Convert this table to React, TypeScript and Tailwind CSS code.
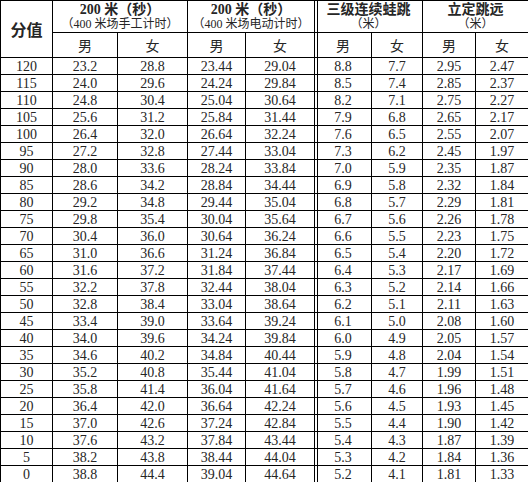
const rows: (string | number)[][] = [
  [120, '23.2', '28.8', '23.44', '29.04', '8.8', '7.7', '2.95', '2.47'],
  [115, '24.0', '29.6', '24.24', '29.84', '8.5', '7.4', '2.85', '2.37'],
  [110, '24.8', '30.4', '25.04', '30.64', '8.2', '7.1', '2.75', '2.27'],
  [105, '25.6', '31.2', '25.84', '31.44', '7.9', '6.8', '2.65', '2.17'],
  [100, '26.4', '32.0', '26.64', '32.24', '7.6', '6.5', '2.55', '2.07'],
  [95, '27.2', '32.8', '27.44', '33.04', '7.3', '6.2', '2.45', '1.97'],
  [90, '28.0', '33.6', '28.24', '33.84', '7.0', '5.9', '2.35', '1.87'],
  [85, '28.6', '34.2', '28.84', '34.44', '6.9', '5.8', '2.32', '1.84'],
  [80, '29.2', '34.8', '29.44', '35.04', '6.8', '5.7', '2.29', '1.81'],
  [75, '29.8', '35.4', '30.04', '35.64', '6.7', '5.6', '2.26', '1.78'],
  [70, '30.4', '36.0', '30.64', '36.24', '6.6', '5.5', '2.23', '1.75'],
  [65, '31.0', '36.6', '31.24', '36.84', '6.5', '5.4', '2.20', '1.72'],
  [60, '31.6', '37.2', '31.84', '37.44', '6.4', '5.3', '2.17', '1.69'],
  [55, '32.2', '37.8', '32.44', '38.04', '6.3', '5.2', '2.14', '1.66'],
  [50, '32.8', '38.4', '33.04', '38.64', '6.2', '5.1', '2.11', '1.63'],
  [45, '33.4', '39.0', '33.64', '39.24', '6.1', '5.0', '2.08', '1.60'],
  [40, '34.0', '39.6', '34.24', '39.84', '6.0', '4.9', '2.05', '1.57'],
  [35, '34.6', '40.2', '34.84', '40.44', '5.9', '4.8', '2.04', '1.54'],
  [30, '35.2', '40.8', '35.44', '41.04', '5.8', '4.7', '1.99', '1.51'],
  [25, '35.8', '41.4', '36.04', '41.64', '5.7', '4.6', '1.96', '1.48'],
  [20, '36.4', '42.0', '36.64', '42.24', '5.6', '4.5', '1.93', '1.45'],
  [15, '37.0', '42.6', '37.24', '42.84', '5.5', '4.4', '1.90', '1.42'],
  [10, '37.6', '43.2', '37.84', '43.44', '5.4', '4.3', '1.87', '1.39'],
  [5, '38.2', '43.8', '38.44', '44.04', '5.3', '4.2', '1.84', '1.36'],
  [0, '38.8', '44.4', '39.04', '44.64', '5.2', '4.1', '1.81', '1.33'],
];

const widths = [52, 65, 70, 58, 69, 57, 51, 53, 53];

const serif = "font-['Liberation_Serif','Noto_Sans_CJK_SC',serif]";
const hei = "font-['Noto_Sans_CJK_SC',sans-serif]";
// second rule of the double line, drawn inside the cell next to its left border
const dbl = 'shadow-[inset_2px_0_0_#fff,inset_3px_0_0_#000]';

function GroupHead({ top, sub, extra = '' }: { top: string; sub: string; extra?: string }) {
  return (
    <th colSpan={2} className={`border border-black p-0 font-normal ${serif} ${extra}`}>
      <div className="text-[14px] font-bold leading-[15px]">{top}</div>
      <div className="text-[12px] leading-[14px]">{sub}</div>
    </th>
  );
}

export default function App() {
  return (
    <div className="w-[528px] h-[482px] overflow-hidden bg-white text-[#262626]">
      <table className={`w-[528px] table-fixed border-collapse ${serif}`}>
        <colgroup>
          {widths.map((w, i) => (
            <col key={i} style={{ width: w }} />
          ))}
        </colgroup>
        <thead>
          <tr className="h-[32px]">
            <th rowSpan={2} className={`border border-black p-0 text-[16px] font-bold ${hei}`}>
              分值
            </th>
            <GroupHead top="200 米（秒）" sub="（400 米场手工计时）" />
            <GroupHead top="200 米（秒）" sub="（400 米场电动计时）" />
            <GroupHead top="三级连续蛙跳" sub="（米）" extra={dbl} />
            <GroupHead top="立定跳远" sub="（米）" />
          </tr>
          <tr className="h-[25px]">
            {['男', '女', '男', '女', '男', '女', '男', '女'].map((g, i) => (
              <th
                key={i}
                className={`border border-black p-0 text-[14px] font-normal ${hei} ${i === 4 ? dbl : ''}`}
              >
                {g}
              </th>
            ))}
          </tr>
        </thead>
        <tbody>
          {rows.map((r) => (
            <tr key={r[0]} className="h-[17px]">
              {r.map((v, i) => (
                <td
                  key={i}
                  className={`border border-black p-0 text-center text-[14px] leading-[15px] ${i === 5 ? dbl : ''}`}
                >
                  {v}
                </td>
              ))}
            </tr>
          ))}
        </tbody>
      </table>
    </div>
  );
}
